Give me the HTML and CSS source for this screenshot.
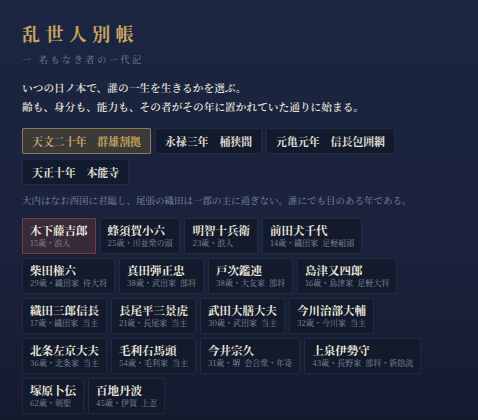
FILE: index.html
```html
<!DOCTYPE html>
<html lang="ja">
  <head>
    <meta charset="UTF-8" />
    <meta name="viewport" content="width=device-width, initial-scale=1.0" />
    <title>乱世人別帳</title>
    <link rel="stylesheet" href="styles.css">
  </head>
  <body>
    <div class="container">
      <h1>乱世人別帳</h1>
      <p class="subtitle">一 名もなき者の一代記</p>

      <!-- 導入文 -->
      <p class="intro">
        いつの日ノ本で、誰の一生を生きるかを選ぶ。<br />
        齢も、身分も、能力も、その者がその年に置かれていた通りに始まる。
      </p>

      <!-- 年代の選択 -->
      <div class="eras">
        <button class="era active">天文二十年　群雄割拠</button>
        <button class="era">永禄三年　桶狭間</button>
        <button class="era">元亀元年　信長包囲網</button>
        <button class="era">天正十年　本能寺</button>
      </div>

      <p class="era-desc">大内はなお西国に君臨し、尾張の織田は一郡の主に過ぎない。誰にでも目のある年である。</p>

      <!-- 人物の選択 -->
      <div class="people">
        <div class="person active">
          <div class="name">木下藤吉郎</div>
          <div class="meta">15歳・浪人</div>
        </div>
        <div class="person">
          <div class="name">蜂須賀小六</div>
          <div class="meta">25歳・川並衆の頭</div>
        </div>
        <div class="person">
          <div class="name">明智十兵衛</div>
          <div class="meta">23歳・浪人</div>
        </div>
        <div class="person">
          <div class="name">前田犬千代</div>
          <div class="meta">14歳・織田家 足軽組頭</div>
        </div>
        <div class="person">
          <div class="name">柴田権六</div>
          <div class="meta">29歳・織田家 侍大将</div>
        </div>
        <div class="person">
          <div class="name">真田弾正忠</div>
          <div class="meta">38歳・武田家 部将</div>
        </div>
        <div class="person">
          <div class="name">戸次鑑連</div>
          <div class="meta">38歳・大友家 部将</div>
        </div>
        <div class="person">
          <div class="name">島津又四郎</div>
          <div class="meta">16歳・島津家 足軽大将</div>
        </div>
        <div class="person">
          <div class="name">織田三郎信長</div>
          <div class="meta">17歳・織田家 当主</div>
        </div>
        <div class="person">
          <div class="name">長尾平三景虎</div>
          <div class="meta">21歳・長尾家 当主</div>
        </div>
        <div class="person">
          <div class="name">武田大膳大夫</div>
          <div class="meta">30歳・武田家 当主</div>
        </div>
        <div class="person">
          <div class="name">今川治部大輔</div>
          <div class="meta">32歳・今川家 当主</div>
        </div>
        <div class="person">
          <div class="name">北条左京大夫</div>
          <div class="meta">36歳・北条家 当主</div>
        </div>
        <div class="person">
          <div class="name">毛利右馬頭</div>
          <div class="meta">54歳・毛利家 当主</div>
        </div>
        <div class="person">
          <div class="name">今井宗久</div>
          <div class="meta">31歳・堺 会合衆・年寄</div>
        </div>
        <div class="person">
          <div class="name">上泉伊勢守</div>
          <div class="meta">43歳・長野家 部将・新陰流</div>
        </div>
        <div class="person">
          <div class="name">塚原卜伝</div>
          <div class="meta">62歳・剣聖</div>
        </div>
        <div class="person">
          <div class="name">百地丹波</div>
          <div class="meta">45歳・伊賀 上忍</div>
        </div>
      </div>
    </div>
  </body>
</html>
```

FILE: styles.css
```css
* {
  margin: 0;
  padding: 0;
  box-sizing: border-box;
}

html,
body {
  height: 100%;
}

body {
  font-family: "Noto Serif CJK JP", "Noto Sans CJK JP", serif;
  background: linear-gradient(180deg, #1c2541 0%, #1a223c 60%, #151b2f 100%);
  background-color: #1a223b;
  color: #e6e2d8;
}

.container {
  padding: 22px 40px 6px 22px;
}

h1 {
  font-size: 18px;
  line-height: 22px;
  font-weight: 700;
  letter-spacing: 0.3em;
  color: #c9a65e;
}

.subtitle {
  margin-top: 9px;
  font-size: 9px;
  line-height: 14px;
  letter-spacing: 0.3em;
  color: #7e879d;
}

.intro {
  margin-top: 11px;
  font-size: 10.7px;
  line-height: 19px;
  font-weight: 600;
  color: #e9e6de;
}

.eras {
  margin-top: 12px;
  display: flex;
  flex-wrap: wrap;
  gap: 5px 4px;
}

.era {
  font-family: inherit;
  font-size: 10.9px;
  line-height: 16px;
  font-weight: 700;
  padding: 4px 9px;
  border: 1px solid #232b42;
  border-radius: 1px;
  background-color: #121a2d;
  color: #e6e2d8;
  cursor: pointer;
}

.era.active {
  background-color: #3b3a38;
  border-color: #8a7a55;
  color: #c9a65e;
}

.era-desc {
  margin-top: 8px;
  font-size: 9.5px;
  line-height: 14px;
  color: #858da2;
}

.people {
  margin-top: 11px;
  display: flex;
  flex-wrap: wrap;
  gap: 4px;
}

.person {
  padding: 4px 7px;
  border: 1px solid #222a40;
  border-radius: 1px;
  background-color: #131a2c;
  cursor: pointer;
}

.person.active {
  background-color: #372a39;
  border-color: #7b3a46;
}

.name {
  font-size: 11.5px;
  line-height: 14px;
  font-weight: 700;
  color: #ece8de;
}

.meta {
  font-size: 8px;
  line-height: 12px;
  word-spacing: 2px;
  color: #878ea0;
}
```
